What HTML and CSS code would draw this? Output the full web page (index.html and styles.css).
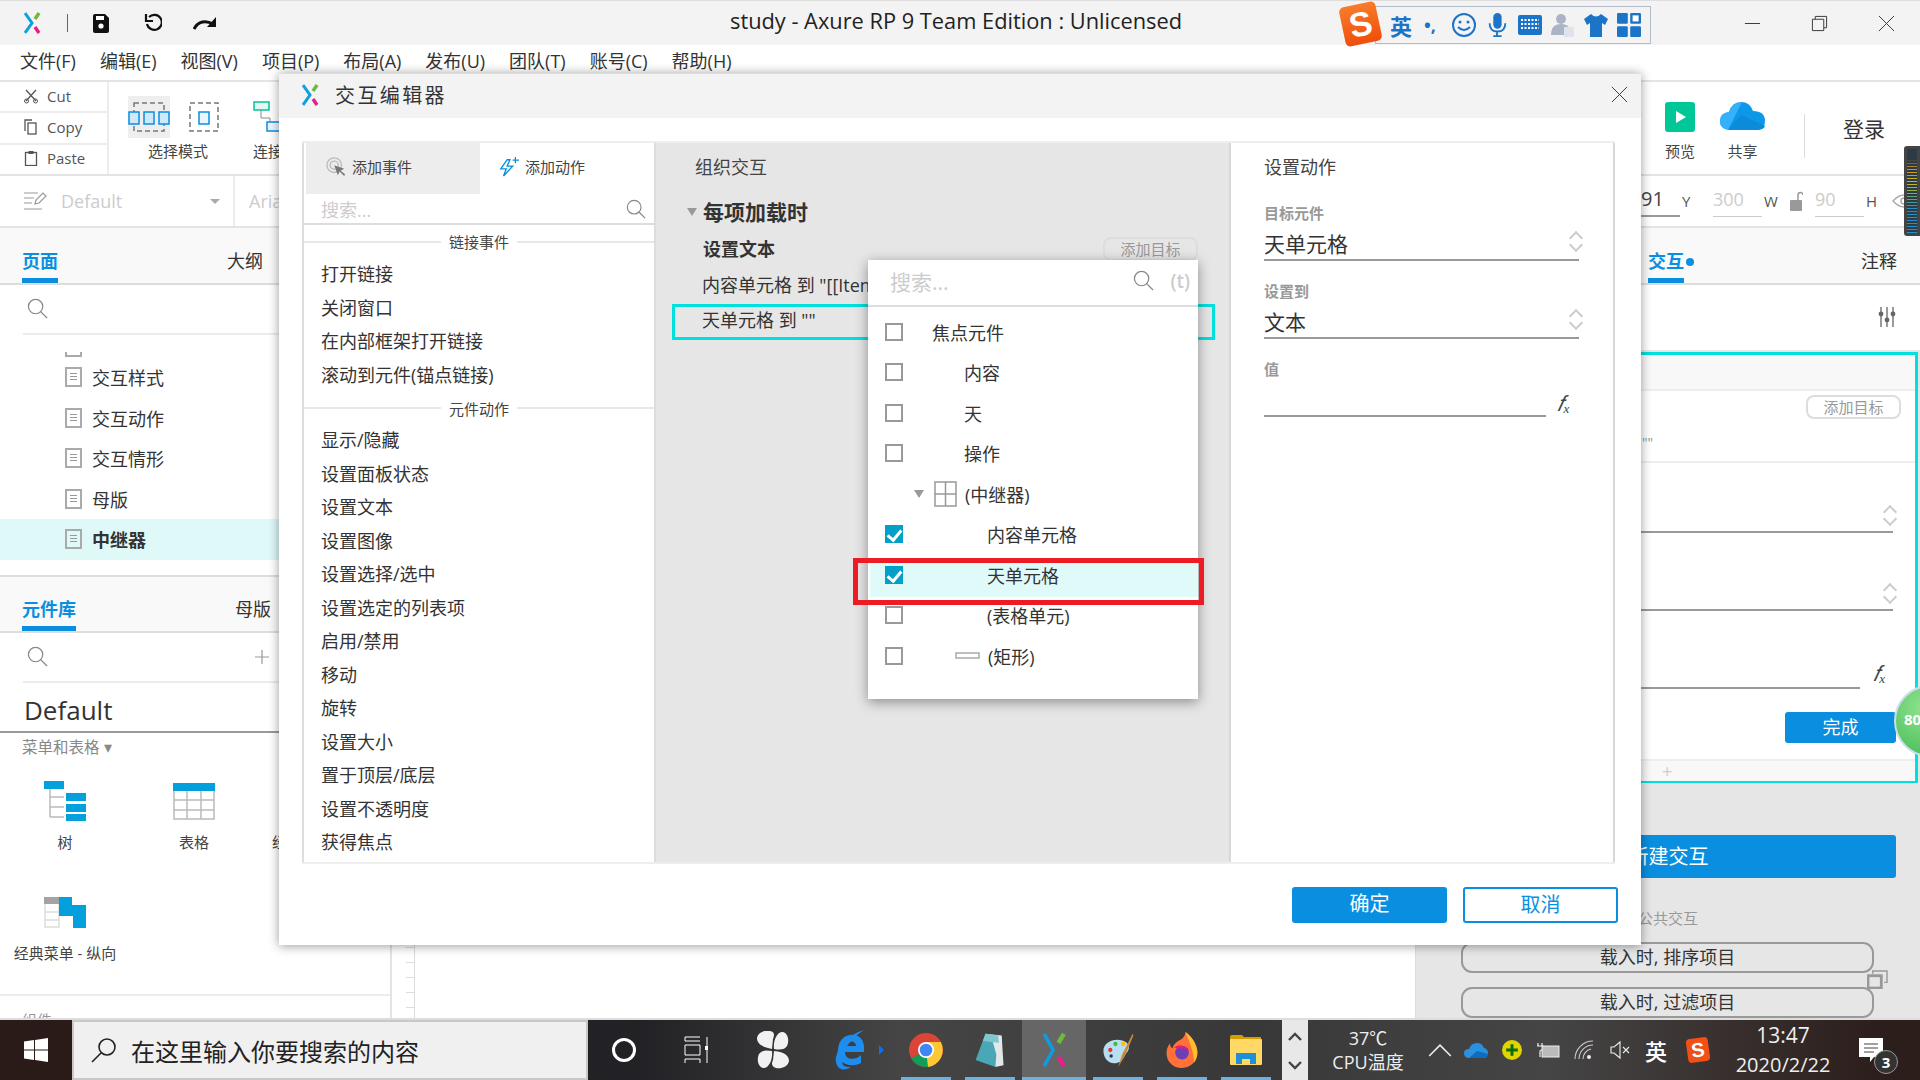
FILE: index.html
```html
<!DOCTYPE html>
<html lang="zh-CN">
<head>
<meta charset="utf-8">
<title>study - Axure RP 9</title>
<link rel="stylesheet" href="styles.css">
</head>
<body>
<div class="screen">
<div class="app">
  <header class="titlebar">
    <svg class="t-logo" viewBox="0 0 18 22"><path d="M1 1l7 10-7 10" fill="none" stroke="#0f9fdc" stroke-width="3"/><path d="M15 1l-4 6" stroke="#6cb83c" stroke-width="3.4"/><path d="M11 15l4 6" stroke="#e61e8c" stroke-width="3.4"/></svg>
    <i class="t-div"></i>
    <svg class="t-save" viewBox="0 0 18 21"><path d="M1 3q0-2 2-2h10l4 4v13q0 2-2 2H3q-2 0-2-2z" fill="#111"/><rect x="4" y="3" width="8" height="4" fill="#fff"/><circle cx="9" cy="13" r="2.6" fill="#fff"/></svg>
    <svg class="t-undo" viewBox="0 0 18 20"><path d="M5 4a7.5 7.5 0 1 1-2 7" fill="none" stroke="#111" stroke-width="2.2"/><path d="M2 1v7h7" fill="none" stroke="#111" stroke-width="2.2"/></svg>
    <svg class="t-redo" viewBox="0 0 24 14"><path d="M1 13C5 5 13 4 20 8" fill="none" stroke="#111" stroke-width="3"/><path d="M23 1v10H14z" fill="#111"/></svg>
    <div class="t-title">study - Axure RP 9 Team Edition : Unlicensed</div>
    <div class="win">
      <svg viewBox="0 0 18 18"><path d="M1 9h16" stroke="#333"/></svg>
      <svg viewBox="0 0 18 18"><path d="M1.5 4.5h12v12h-12zM4.5 4.5v-3h12v12h-3" fill="none" stroke="#333"/></svg>
      <svg viewBox="0 0 18 18"><path d="M1 1l16 16M17 1L1 17" stroke="#333"/></svg>
    </div>
  </header>
  <nav class="menubar"><span>文件(F)</span><span>编辑(E)</span><span>视图(V)</span><span>项目(P)</span><span>布局(A)</span><span>发布(U)</span><span>团队(T)</span><span>账号(C)</span><span>帮助(H)</span></nav>
  <section class="toolbar">
    <div class="clip">
      <div class="clip-row"><svg viewBox="0 0 16 16"><path d="M3 2l10 11M13 2L3 13" stroke="#555" stroke-width="1.3"/><circle cx="3.5" cy="13" r="2" fill="none" stroke="#555"/><circle cx="12.5" cy="13" r="2" fill="none" stroke="#555"/></svg><span>Cut</span></div>
      <div class="clip-row"><svg viewBox="0 0 16 16"><path d="M2 12V1h7" fill="none" stroke="#555" stroke-width="1.3"/><rect x="5" y="4" width="8" height="11" fill="none" stroke="#555" stroke-width="1.3"/></svg><span>Copy</span></div>
      <div class="clip-row"><svg viewBox="0 0 16 16"><rect x="2.5" y="2.5" width="11" height="13" fill="none" stroke="#555" stroke-width="1.3"/><rect x="5.5" y="1" width="5" height="3" fill="#555"/></svg><span>Paste</span></div>
    </div>
    <div class="tools">
      <div class="tool tool-sel">
        <div class="sel-icons">
          <div class="sel-on"><svg viewBox="0 0 42 32"><rect x="6" y="2" width="30" height="28" fill="none" stroke="#777" stroke-dasharray="5 3" stroke-width="1.5"/><g fill="#cfe8fa" stroke="#0a8fe0" stroke-width="1.5"><rect x="1" y="11" width="10" height="12"/><rect x="16" y="11" width="10" height="12"/><rect x="31" y="11" width="10" height="12"/></g></svg></div>
          <svg class="sel-off" viewBox="0 0 30 32"><rect x="1" y="2" width="28" height="28" fill="none" stroke="#777" stroke-dasharray="5 3" stroke-width="1.5"/><rect x="10" y="11" width="10" height="12" fill="#eaf5fd" stroke="#0a8fe0" stroke-width="1.5"/></svg>
        </div>
        <span>选择模式</span>
      </div>
      <div class="tool tool-conn">
        <svg viewBox="0 0 30 32"><rect x="1" y="1" width="15" height="8" fill="#e3f8f2" stroke="#00c39a" stroke-width="1.5"/><path d="M8 9v8h9v5" fill="none" stroke="#888"/><rect x="14" y="21" width="15" height="9" fill="#eaf5fd" stroke="#0a8fe0" stroke-width="1.5"/></svg>
        <span>连接</span>
      </div>
      <div class="tool-right">
        <div class="tool tool-play"><svg viewBox="0 0 30 30"><rect width="30" height="30" rx="3" fill="#00c797"/><path d="M12 9l10 6-10 6z" fill="#fff" transform="translate(-1 0)"/></svg><span>预览</span></div>
        <div class="tool tool-cloud"><svg viewBox="0 0 45 29"><path d="M10 28Q0 27 0 19t9-9q3-10 12-10t12 9q12 0 12 10 0 9-9 9z" fill="#0c97e8"/><path d="M8 28L22 0Q13 0 9 10 0 11 0 19q0 8 8 9z" fill="#35b0fb"/><path d="M8 28L21 13l24 11q-1 4-9 4z" fill="#0b8bd8"/></svg><span>共享</span></div>
        <i class="tool-sep"></i>
        <div class="login">登录</div>
      </div>
    </div>
  </section>
  <section class="stylebar">
    <div class="style-l">
      <svg viewBox="0 0 24 20"><path d="M1 2h14M1 7h10M1 12h8M1 18h18" stroke="#999" stroke-width="1.2"/><path d="M12 13l1-4 7-7 3 3-7 7z" fill="none" stroke="#999" stroke-width="1.2"/></svg>
      <span class="style-name">Default</span>
      <i class="style-arrow"></i>
    </div>
    <span class="style-font">Arial</span>
    <div class="coords">
      <span class="coord coord-on">91</span><b>Y</b>
      <span class="coord">300</span><b>W</b>
      <svg class="lock" viewBox="0 0 13 20"><rect y="9" width="12" height="11" rx="1" fill="#999"/><path d="M8 9V4a2.5 2.5 0 0 1 5 0" fill="none" stroke="#999" stroke-width="1.5"/></svg>
      <span class="coord coord-s">90</span><b>H</b>
      <svg class="eye" viewBox="0 0 24 16"><path d="M1 8q11-12 22 0-11 12-22 0z" fill="none" stroke="#aaa" stroke-width="1.4"/><circle cx="12" cy="8" r="3" fill="none" stroke="#aaa" stroke-width="1.4"/></svg>
    </div>
  </section>
  <main class="main">
    <aside class="left">
      <div class="ptabs"><span class="ptab on">页面</span><span class="ptab">大纲</span></div>
      <div class="lsearch"><svg viewBox="0 0 22 22"><circle cx="9" cy="9" r="7.5" fill="none" stroke="#888" stroke-width="1.3"/><path d="M14 14l7 7" stroke="#888" stroke-width="1.3"/></svg></div>
      <div class="tree">
        <div class="cut-row"><i class="pg"></i></div>
        <div class="tree-row"><i class="pg"></i><span>交互样式</span></div>
        <div class="tree-row"><i class="pg"></i><span>交互动作</span></div>
        <div class="tree-row"><i class="pg"></i><span>交互情形</span></div>
        <div class="tree-row"><i class="pg"></i><span>母版</span></div>
        <div class="tree-row active"><i class="pg"></i><span>中继器</span></div>
      </div>
      <div class="ptabs lib-tabs"><span class="ptab on">元件库</span><span class="ptab">母版</span></div>
      <div class="lsearch lib-search"><svg viewBox="0 0 22 22"><circle cx="9" cy="9" r="7.5" fill="none" stroke="#888" stroke-width="1.3"/><path d="M14 14l7 7" stroke="#888" stroke-width="1.3"/></svg><svg class="plus" viewBox="0 0 16 16"><path d="M8 1v14M1 8h14" stroke="#999" stroke-width="1.2"/></svg></div>
      <div class="lib-name">Default</div>
      <div class="lib-group">菜单和表格 ▾</div>
      <div class="widgets">
        <div class="widget w-tree"><svg viewBox="0 0 42 40"><path d="M6 6v30M6 16h14M6 26h14M6 36h14" fill="none" stroke="#bbb" stroke-width="1.5"/><g fill="#04a0dd"><rect width="20" height="8"/><rect x="22" y="12" width="20" height="8"/><rect x="22" y="23" width="20" height="8"/><rect x="22" y="33" width="20" height="7"/></g></svg><span>树</span></div>
        <div class="widget w-table"><svg viewBox="0 0 42 37"><rect y="0" width="42" height="8" fill="#04a0dd"/><path d="M1 8v28h40V8M14 8v28M28 8v28M1 17h40M1 27h40" fill="none" stroke="#bbb" stroke-width="1.5"/></svg><span>表格</span></div>
        <div class="widget w-extra"><span>经典菜单</span></div>
      </div>
      <div class="widget w-menu"><svg viewBox="0 0 42 31"><rect width="15" height="7" fill="#a3a3a3"/><path d="M1 7v23h14V7M1 15h14M1 23h14" fill="none" stroke="#ddd" stroke-width="1.5"/><path d="M15 0h13v8h14v23H29V19H15z" fill="#04a0dd"/></svg><span>经典菜单 - 纵向</span></div>
      <div class="left-foot"><span>组件</span></div>
    </aside>
    <div class="ruler"></div>
    <div class="canvas"></div>
    <aside class="inspector">
      <div class="ins-tabs"><span class="ptab on">交互</span><i class="ins-dot"></i><span class="ptab ins-note">注释</span></div>
      <div class="ins-tool"><svg viewBox="0 0 18 22"><path d="M3 1v20M9 1v20M15 1v20" stroke="#666" stroke-width="1.3"/><circle cx="3" cy="8" r="2.4" fill="#666"/><circle cx="9" cy="14" r="2.4" fill="#666"/><circle cx="15" cy="8" r="2.4" fill="#666"/></svg></div>
      <div class="ins-panel">
        <div class="card">
          <div class="card-head"></div>
          <div class="card-top"><span class="btn-ghost">添加目标</span></div>
          <div class="card-quote">""</div>
          <div class="card-field card-f1"><i class="chev"></i></div>
          <div class="card-field"><i class="chev"></i></div>
          <div class="card-fx"><i class="fx">𝑓ₓ</i></div>
          <div class="card-done"><span class="btn-done">完成</span></div>
          <div class="card-foot">+</div>
        </div>
        <div class="new-btn">新建交互</div>
        <div class="common">公共交互</div>
        <div class="pill">载入时, 排序项目</div>
        <div class="pill">载入时, 过滤项目</div>
      </div>
    </aside>
  </main>
</div>

<footer class="taskbar">
  <div class="start"><svg viewBox="0 0 24 24"><path d="M0 3.5l10-1.4V11.500H0zM11 2l13-2v11.500H11zM0 12.500h10v9.400L0 20.500zM11 12.500h13V24l-13-2z" fill="#fff"/></svg></div>
  <div class="tsearch"><svg viewBox="0 0 26 26"><circle cx="16" cy="10" r="8" fill="none" stroke="#222" stroke-width="1.6"/><path d="M10 16L1 25" stroke="#222" stroke-width="1.6"/></svg><span>在这里输入你要搜索的内容</span></div>
  <div class="tc tc-cortana"><i class="cortana"></i></div>
  <div class="tc tc-view"><svg viewBox="0 0 24 28"><path d="M1 5V1h15M1 5h15M1 23h15M1 27v-4M16 27v-4M1 9h15v10H1zM23 1v26" fill="none" stroke="#fff"/><rect x="21" y="10" width="4" height="4" fill="#fff"/></svg></div>
  <div class="tc tc-fan"><svg viewBox="0 0 32 38"><path d="M15 18C4 16 0 12 0 7 1 1 8-1 13 0q6 1 3 8zM17 18c-1-10 4-18 9-17 6 2 6 10 4 14q-3 5-13 3zM17 20c11 1 15 5 15 10-1 6-8 8-13 7q-6-2-3-8zM15 20c1 10-4 18-9 17-6-2-6-10-4-14q3-5 13-3z" fill="#f1f1f1"/></svg></div>
  <div class="tc tc-ie"><svg viewBox="0 0 32 42"><path d="M4 20C5 9 14 5 20 6c8 1 11 8 10 17H11c0 8 10 9 16 3v8C15 40 1 33 4 20zM12 17h10c0-6-9-6-10 0z" fill="#1d8ef0"/><path d="M3 36C-3 26 14 4 31 1c-10 4-28 24-22 35 2 2 4 2 8 2-6 4-12 3-14-2z" fill="#1d8ef0"/></svg><i class="ie-arrow"></i></div>
  <div class="tc run"><svg viewBox="0 0 34 34"><circle cx="17" cy="17" r="17" fill="#db4437"/><path d="M17 17L2.300 25.500A17 17 0 0 0 22 33.300z" fill="#0f9d58"/><path d="M17 9h14.700A17 17 0 0 1 19 34L17 17z" fill="#fcc934"/><circle cx="17" cy="17" r="8" fill="#fff"/><circle cx="17" cy="17" r="6.300" fill="#4285f4"/></svg></div>
  <div class="tc run"><svg viewBox="0 0 34 40"><path d="M12 2l18 2 2 33-9 2z" fill="#e3e7e8"/><path d="M12 2L1 31l22 8 1-14-6-22z" fill="#4aa7b5"/><path d="M12 2l-3 8 18 2-1-8z" fill="#7fc7cf"/></svg></div>
  <div class="tc run cur"><svg viewBox="0 0 28 40"><path d="M3 2l10 18L3 38" fill="none" stroke="#0e9be0" stroke-width="4"/><path d="M25 2l-6 10" stroke="#6dbb3c" stroke-width="5"/><path d="M19 28l6 10" stroke="#ea1e8c" stroke-width="5"/></svg></div>
  <div class="tc run"><svg viewBox="0 0 38 42"><path d="M2 22C2 12 14 7 24 10c9 3 9 9 6 13-3 3-4 8-9 12C10 40 2 32 2 22z" fill="#b8def2"/><circle cx="10" cy="21" r="2.500" fill="#e33"/><circle cx="16" cy="14" r="2.500" fill="#4b4"/><circle cx="25" cy="14" r="2.500" fill="#fb0"/><circle cx="11" cy="28" r="2" fill="#334"/><path d="M36 2L24 26l-5 15 8-13L37 4z" fill="#c9873b"/></svg></div>
  <div class="tc run"><svg viewBox="0 0 36 42"><path d="M18 42C6 42 0 33 0 25c0-6 2-9 4-12 0 3 1 5 3 6 2-8 9-9 12-12 2-2 3-5 3-7 6 4 14 14 14 24 0 10-8 18-18 18z" fill="#ff7139"/><path d="M22 0c6 4 14 14 14 24 0 5-2 9-4 12 0-11-4-22-10-36z" fill="#ffbd2e"/><circle cx="18" cy="24" r="8" fill="#6b3fb5"/><path d="M9 18c6-4 12-2 17 2-7-1-12 0-17-2z" fill="#e11d78"/></svg></div>
  <div class="tc run"><svg viewBox="0 0 34 32"><path d="M1 3q0-2 2-2h10l2 2h17v6H1z" fill="#d69d00"/><rect x="1" y="5" width="32" height="26" rx="1" fill="#ffd866"/><path d="M7 30v-11h20v11h-6v-5h-8v5z" fill="#1f8fd6"/></svg></div>
  <div class="scroller"><svg viewBox="0 0 14 9"><path d="M1 8l6-6 6 6" fill="none" stroke="#444" stroke-width="2.400"/></svg><svg viewBox="0 0 14 9"><path d="M1 1l6 6 6-6" fill="none" stroke="#444" stroke-width="2.400"/></svg></div>
  <div class="cpu"><span>37℃</span><span>CPU温度</span></div>
  <div class="tray">
    <div class="ti"><svg viewBox="0 0 20 12"><path d="M1 11l9-9 9 9" fill="none" stroke="#eee" stroke-width="1.300"/></svg></div>
    <div class="ti"><svg viewBox="0 0 24 16"><path d="M5 16Q0 16 0 11q0-4 5-4 2-6 8-6 5 0 7 5 4 1 4 5 0 5-5 5z" fill="#2a90e0"/><path d="M5 16l8-7 11 3q0 4-5 4z" fill="#0f6dbf"/></svg></div>
    <div class="ti"><svg viewBox="0 0 24 24"><circle cx="12" cy="12" r="12" fill="#e2d400"/><path d="M12 5v14M5 12h14" stroke="#0a6b10" stroke-width="3.500"/></svg></div>
    <div class="ti"><svg viewBox="0 0 24 16"><path d="M2 1v3M6 1v3M1 4h6v3l-3 2v6" fill="none" stroke="#eee" stroke-width="1.200"/><rect x="6" y="4" width="17" height="11" fill="#bbb" stroke="#eee"/></svg></div>
    <div class="ti"><svg viewBox="0 0 20 20"><path d="M1 19A18 18 0 0 1 19 1M5 19A14 14 0 0 1 19 5M9 19A10 10 0 0 1 17 9" fill="none" stroke="#ccc" stroke-width="1.100"/><circle cx="15" cy="17" r="2" fill="#eee"/></svg></div>
    <div class="ti"><svg viewBox="0 0 20 20"><path d="M1 7h3l6-5v16l-6-5H1z" fill="none" stroke="#eee" stroke-width="1.100"/><path d="M13 7l6 6M19 7l-6 6" stroke="#eee" stroke-width="1.100"/></svg></div>
    <div class="ti ti-ime">英</div>
    <div class="ti ti-s"><span>S</span></div>
  </div>
  <div class="clock"><span class="clock-t">13:47</span><span class="clock-d">2020/2/22</span></div>
  <div class="action"><svg viewBox="0 0 24 24"><path d="M0 0h24v19H15l-4 5v-5H0z" fill="#fff"/><path d="M5 6h14M5 10h14M5 14h10" stroke="#444" stroke-width="1.200"/></svg><span class="action-badge">3</span></div>
</footer>

<section class="dialog">
  <div class="d-title">
    <svg viewBox="0 0 18 22"><path d="M1 1l7 10-7 10" fill="none" stroke="#0f9fdc" stroke-width="3"/><path d="M15 1l-4 6" stroke="#6cb83c" stroke-width="3.400"/><path d="M11 15l4 6" stroke="#e61e8c" stroke-width="3.400"/></svg>
    <span>交互编辑器</span>
    <svg class="d-close" viewBox="0 0 18 18"><path d="M1 1l16 16M17 1L1 17" stroke="#333"/></svg>
  </div>
  <div class="d-body">
    <div class="col-lib">
      <div class="lib-tabbar">
        <div class="ltab ltab-on"><svg viewBox="0 0 22 22"><circle cx="9" cy="9" r="8" fill="none" stroke="#bbb" stroke-width="1.500"/><circle cx="9" cy="9" r="4.500" fill="none" stroke="#bbb" stroke-width="1.500"/><path d="M9 9l4 11 2-4 5 5 1-2-5-4 4-2z" fill="#777"/></svg><span>添加事件</span></div>
        <div class="ltab"><svg viewBox="0 0 22 22"><path d="M9 3L2 13h6l-3 8 10-11H9l3-7z" fill="none" stroke="#0a8fe0" stroke-width="1.500"/><path d="M18 0v7M15 3.500h7" stroke="#0a8fe0" stroke-width="1.400"/></svg><span>添加动作</span></div>
      </div>
      <div class="l-search"><span>搜索...</span><svg viewBox="0 0 22 22"><circle cx="9" cy="9" r="7.500" fill="none" stroke="#888" stroke-width="1.300"/><path d="M14 14l7 7" stroke="#888" stroke-width="1.300"/></svg></div>
      <div class="l-sec"><span>链接事件</span></div>
      <ul class="l-list">
        <li>打开链接</li><li>关闭窗口</li><li>在内部框架打开链接</li><li>滚动到元件(锚点链接)</li>
      </ul>
      <div class="l-sec l-sec2"><span>元件动作</span></div>
      <ul class="l-list">
        <li>显示/隐藏</li><li>设置面板状态</li><li>设置文本</li><li>设置图像</li><li>设置选择/选中</li><li>设置选定的列表项</li><li>启用/禁用</li><li>移动</li><li>旋转</li><li>设置大小</li><li>置于顶层/底层</li><li>设置不透明度</li><li>获得焦点</li>
      </ul>
    </div>
    <div class="col-org">
      <div class="org-h">组织交互</div>
      <div class="org-ev"><i class="tri"></i><span>每项加载时</span></div>
      <div class="org-act"><span>设置文本</span><span class="btn-ghost">添加目标</span></div>
      <div class="org-line">内容单元格 到 "[[Item.内容]]"</div>
      <div class="org-sel">天单元格 到 ""</div>
      <div class="popup">
        <div class="p-search"><span>搜索...</span><svg viewBox="0 0 22 22"><circle cx="9" cy="9" r="7.500" fill="none" stroke="#888" stroke-width="1.300"/><path d="M14 14l7 7" stroke="#888" stroke-width="1.300"/></svg><em>(t)</em></div>
        <div class="p-list">
          <div class="p-red"></div>
          <div class="p-row"><i class="ck"></i><span class="i0">焦点元件</span></div>
          <div class="p-row"><i class="ck"></i><span class="i1">内容</span></div>
          <div class="p-row"><i class="ck"></i><span class="i1">天</span></div>
          <div class="p-row"><i class="ck"></i><span class="i1">操作</span></div>
          <div class="p-row p-group"><i class="tri"></i><svg viewBox="0 0 23 26"><path d="M1 1h21v24H1zM11.500 1v24M1 13h21" fill="none" stroke="#999" stroke-width="1.500"/></svg><span>(中继器)</span></div>
          <div class="p-row"><i class="ck on"></i><span class="i2">内容单元格</span></div>
          <div class="p-row"><i class="ck on"></i><span class="i2">天单元格</span></div>
          <div class="p-row"><i class="ck"></i><span class="i2">(表格单元)</span></div>
          <div class="p-row"><i class="ck"></i><svg class="p-rect" viewBox="0 0 25 7"><rect x="1" y="1" width="23" height="5" fill="#fff" stroke="#aaa" stroke-width="1.500"/></svg><span>(矩形)</span></div>
        </div>
      </div>
    </div>
    <div class="col-set">
      <div class="set-h">设置动作</div>
      <label class="set-l set-l1">目标元件</label>
      <div class="set-f">天单元格<i class="chev"></i></div>
      <label class="set-l">设置到</label>
      <div class="set-f">文本<i class="chev"></i></div>
      <label class="set-l">值</label>
      <div class="set-v"><div class="set-line"></div><i class="fx">𝑓ₓ</i></div>
    </div>
  </div>
  <div class="d-foot"><span class="btn-ok">确定</span><span class="btn-no">取消</span></div>
</section>

<div class="sogou">
  <div class="sg-s">S</div>
  <span class="sg-en">英</span>
  <span class="sg-p">•,</span>
  <svg viewBox="0 0 24 24"><circle cx="12" cy="12" r="11" fill="none" stroke="#1c74c8" stroke-width="2"/><circle cx="8" cy="9" r="1.500" fill="#1c74c8"/><circle cx="16" cy="9" r="1.500" fill="#1c74c8"/><path d="M6 14q6 6 12 0" fill="none" stroke="#1c74c8" stroke-width="2"/></svg>
  <svg viewBox="0 0 20 26"><rect x="6" width="9" height="17" rx="4.500" fill="#1c74c8"/><path d="M2 11q0 9 8.500 9T19 11M10 20v5M6 25h9" fill="none" stroke="#1c74c8" stroke-width="2"/></svg>
  <svg viewBox="0 0 24 20"><rect width="24" height="20" rx="2" fill="#1c74c8"/><path d="M3 5h18M3 9h18M3 13h18" stroke="#fff" stroke-width="2" stroke-dasharray="2 1.500"/></svg>
  <svg viewBox="0 0 24 24"><circle cx="10" cy="6" r="5" fill="#aab4c4"/><path d="M0 22q0-11 10-11t10 11z" fill="#aab4c4"/><rect x="13" y="14" width="10" height="10" fill="#dfe3ea"/></svg>
  <svg viewBox="0 0 24 24"><path d="M7 1L0 6l3 6 3-2v14h12V10l3 2 3-6-7-5q-5 5-10 0z" fill="#1c74c8"/></svg>
  <svg viewBox="0 0 20 20"><g fill="#1c74c8"><rect width="9" height="9" rx="1"/><rect x="11" width="9" height="9" rx="1"/><rect y="11" width="9" height="9" rx="1"/><rect x="11" y="11" width="9" height="9" rx="1"/></g><rect x="13" y="2" width="5" height="5" fill="#fff"/></svg>
</div>
<div class="meter"></div>
<div class="ball"><span>80</span></div>
<svg class="float-ic" viewBox="0 0 22 20"><path d="M6 4V1h15v12h-3" fill="none" stroke="#999" stroke-width="1.500"/><rect x="1" y="6" width="14" height="13" fill="none" stroke="#999" stroke-width="3"/></svg>
</div>
</body>
</html>
```

FILE: styles.css
```css
* { box-sizing: border-box; }
html, body { margin: 0; height: 100%; }
body { font-family: "Open Sans", "Noto Sans CJK SC", sans-serif; color: #333; background: #fff; overflow: hidden; }
i, em { font-style: normal; }
ul { list-style: none; margin: 0; padding: 0; }
.screen { position: relative; width: 1920px; height: 1080px; display: flex; flex-direction: column; overflow: hidden; }
.app { height: 1020px; display: flex; flex-direction: column; border-bottom: 2px solid #ddd; }

/* title bar */
.titlebar { height: 45px; flex: none; background: #f3f3f3; border-top: 1px solid #ddd; display: flex; align-items: center; position: relative; }
.t-logo { width: 18px; height: 22px; margin-left: 24px; }
.t-div { width: 1px; height: 18px; background: #666; margin-left: 25px; }
.t-save { width: 18px; height: 21px; margin-left: 24px; }
.t-undo { width: 18px; height: 20px; margin-left: 34px; }
.t-redo { width: 24px; height: 14px; margin-left: 31px; }
.t-title { margin-left: 513px; width: 460px; font-size: 21.8px; white-space: nowrap; color: #222; margin-top: -6px; }
.win { margin-left: auto; display: flex; gap: 50px; margin-right: 25px; }
.win svg { width: 17px; height: 17px; }

/* menu */
.menubar { height: 37px; flex: none; display: flex; gap: 24px; padding: 2px 0 0 20px; font-size: 18px; border-bottom: 2px solid #e4e4e4; color: #333; line-height: 28px; }

/* toolbar */
.toolbar { height: 94px; flex: none; display: flex; border-bottom: 2px solid #e4e4e4; }
.clip { width: 109px; border-right: 2px solid #ececec; display: flex; flex-direction: column; }
.clip-row { flex: 1; display: flex; align-items: center; gap: 8px; padding: 0 0 2px 23px; font-size: 15px; color: #555; border-bottom: 2px solid #ececec; }
.clip-row:last-child { border-bottom: 0; }
.clip-row svg { width: 16px; height: 16px; }
.tools { flex: 1; display: flex; }
.tool { display: flex; flex-direction: column; align-items: center; font-size: 15px; color: #444; }
.tool span { line-height: 22px; }
.tool-sel { margin-left: 19px; width: 100px; }
.sel-icons { display: flex; align-items: center; gap: 19px; align-self: flex-start; margin-bottom: 2px; margin-top: 14px; }
.sel-on { width: 42px; height: 42px; background: #eee; display: flex; align-items: center; }
.sel-on svg { width: 42px; height: 32px; }
.sel-off { width: 30px; height: 32px; }
.tool-conn { margin-left: 25px; align-items: flex-start; }
.tool-conn svg { width: 30px; height: 32px; margin: 19px 0 7px; }
.tool-right { margin-left: auto; display: flex; align-items: flex-start; padding-right: 35px; }
.tool-play { width: 30px; margin-top: 20px; }
.tool-play svg { width: 30px; height: 30px; margin-bottom: 8px; }
.tool-cloud { width: 45px; margin: 20px 0 0 25px; }
.tool-cloud svg { width: 45px; height: 29px; margin-bottom: 9px; }
.tool-sep { width: 1px; height: 44px; background: #ddd; margin: 32px 0 0 39px; }
.login { font-size: 21px; margin: 32px 0 0 38px; line-height: 30px; color: #333; }

/* style bar */
.stylebar { height: 52px; flex: none; display: flex; align-items: center; border-bottom: 2px solid #e4e4e4; }
.style-l { width: 235px; height: 100%; border-right: 2px solid #ececec; display: flex; align-items: center; padding-left: 23px; }
.style-l svg { width: 24px; height: 20px; }
.style-name { margin-left: 14px; font-size: 18px; color: #ccc; }
.style-arrow { margin-left: auto; margin-right: 13px; border: 5px solid transparent; border-top-color: #aaa; border-bottom: 0; }
.style-font { margin-left: 14px; font-size: 18px; color: #ccc; }
.coords { margin-left: auto; display: flex; align-items: center; height: 100%; font-size: 15px; }
.coords b { font-weight: 400; color: #555; width: 33px; }
.coord { width: 49px; height: 32px; font-size: 18px; line-height: 28px; color: #ccc; border-bottom: 1px solid #ccc; margin-right: 2px; }
.coord-on { width: 39px; color: #444; border-bottom: 2px solid #999; margin-right: 2px; font-size: 20px; }
.coords .coord-on + b { width: 31px; }
.coords b:nth-of-type(2) { width: 26px; }
.lock { width: 13px; height: 20px; margin-right: 12px; }
.coords .coord-s + b { width: 26px; }
.eye { width: 24px; height: 16px; margin-right: 4px; }

/* main */
.main { flex: 1; display: flex; min-height: 0; }
.left { width: 392px; flex: none; border-right: 2px solid #e4e4e4; overflow: hidden; }
.ptabs { height: 57px; background: #f9f9f9; border-bottom: 2px solid #ddd; display: flex; padding-left: 22px; }
.ptab { font-size: 18px; line-height: 24px; padding: 21px 0 0; height: 55px; color: #333; }
.ptabs .ptab + .ptab { margin-left: 169px; }
.ptab.on { color: #0a8fe0; font-weight: 700; border-bottom: 5px solid #0a8fe0; }
.lsearch { height: 50px; padding: 13px 0 0 27px; display: flex; position: relative; }
.lsearch::after { content: ""; position: absolute; left: 23px; right: 0; bottom: 0; height: 2px; background: #ececec; }
.lsearch svg { width: 21px; height: 21px; }
.tree { height: 242px; border-bottom: 2px solid #ddd; overflow: hidden; }
.cut-row { height: 22px; padding-left: 65px; overflow: hidden; display: flex; align-items: flex-end; }
.cut-row .pg { height: 5px; border-top: 0; }
.tree-row { height: 40.5px; display: flex; align-items: center; padding-left: 65px; font-size: 18px; color: #333; }
.tree-row span { margin-left: 10px; }
.tree-row.active { background: #dff9f9; font-weight: 700; }
.pg { width: 17px; height: 20px; border: 2px solid #aaa; flex: none; background: linear-gradient(#999,#999) 3px 4px / 7px 1px no-repeat, linear-gradient(#999,#999) 3px 7px / 7px 1px no-repeat, linear-gradient(#999,#999) 3px 10px / 7px 1px no-repeat; }
.lib-tabs { height: 56px; }
.lib-tabs .ptab { height: 54px; padding-top: 20px; }
.lib-tabs .ptab + .ptab { margin-left: 159px; }
.plus { width: 16px; height: 16px; }
.lib-search .plus { position: absolute; left: 254px; top: 16px; width: 16px; height: 16px; }
.lib-name { height: 50px; font-size: 26px; padding: 10px 0 0 24px; line-height: 34px; border-bottom: 2px solid #999; color: #333; }
.lib-group { font-size: 15.500px; color: #888; padding: 2px 0 0 22px; line-height: 24px; height: 26px; }
.widgets { display: flex; height: 116px; padding-top: 22px; }
.widget { display: flex; flex-direction: column; align-items: center; font-size: 15px; color: #444; }
.w-tree { width: 42px; margin-left: 44px; }
.w-tree svg { width: 42px; height: 40px; margin-bottom: 10px; }
.w-table { width: 42px; margin-left: 87px; margin-top: 2px; }
.w-table svg { width: 42px; height: 37px; margin-bottom: 11px; }
.w-extra { margin-left: 57px; padding-top: 50px; align-items: flex-start; white-space: nowrap; }
.w-menu { width: 140px; margin-left: -5px; padding-top: 22px; height: 119px; }
.w-menu svg { width: 42px; height: 31px; margin-bottom: 14px; }
.w-menu span { white-space: nowrap; }
.left-foot { border-top: 2px solid #ececec; height: 24px; font-size: 15px; line-height: 20px; padding: 14px 0 0 22px; color: #999; overflow: hidden; }

.ruler { width: 23px; flex: none; border-right: 1px solid #ddd; background: repeating-linear-gradient(#fff 0 14px, #ddd 14px 15px) 14px 0 / 9px 100% no-repeat; }
.canvas { flex: 1; background: #fff; }
.inspector { width: 505px; flex: none; background: #fff; border-left: 1px solid #ddd; display: flex; flex-direction: column; overflow: hidden; }
.ins-tabs { height: 57px; flex: none; background: #f9f9f9; border-bottom: 2px solid #ddd; display: flex; padding-left: 232px; }
.ins-dot { width: 8px; height: 8px; border-radius: 50%; background: #0a8fe0; margin: 30px 0 0 2px; }
.ptab.ins-note { margin-left: 167px; }
.ins-tool { height: 65px; flex: none; padding: 21px 24px 0 0; display: flex; justify-content: flex-end; }
.ins-tool svg { width: 18px; height: 22px; }
.ins-panel { flex: 1; background: #e6e6e6; padding: 2px 2px 0 0; min-height: 0; overflow: hidden; }
.card { height: 431px; border: 3px solid #00e0dc; background: #fff; margin-left: 10px; display: flex; flex-direction: column; }
.card-head { height: 36px; background: #f8f8f8; border-bottom: 2px solid #eee; flex: none; }
.card-top { height: 30px; display: flex; justify-content: flex-end; padding: 4px 14px 0 0; flex: none; }
.btn-ghost { width: 95px; height: 24px; border: 2px solid #ddd; border-radius: 8px; font-size: 15px; line-height: 20px; text-align: center; color: #999; flex: none; }
.card-quote { height: 42px; flex: none; border-bottom: 2px solid #eee; padding: 12px 0 0 213px; font-size: 14px; color: #999; }
.card-field { height: 78px; flex: none; border-bottom: 2px solid #999; margin-right: 22px; position: relative; }
.card-f1 { height: 70px; }
.card-field .chev { position: absolute; right: -2px; bottom: 3px; }
.card-fx { height: 78px; flex: none; border-bottom: 2px solid #999; margin-right: 55px; position: relative; }
.card-fx .fx { position: absolute; right: -26px; bottom: 0; }
.card-done { height: 72px; flex: none; border-bottom: 2px solid #eee; display: flex; justify-content: flex-end; padding: 23px 19px 0 0; }
.btn-done { width: 111px; height: 31px; background: #0a8fe0; color: #fff; font-size: 18px; line-height: 30px; text-align: center; border-radius: 3px; }
.card-foot { flex: 1; background: #f8f8f8; color: #ccc; font-size: 18px; line-height: 20px; padding-left: 233px; }
.new-btn { margin: 52px 22px 0 25px; height: 43px; background: #0a8fe0; color: #fff; font-size: 20px; line-height: 44px; text-align: center; border-radius: 3px; }
.common { font-size: 15px; color: #999; margin: 29px 0 0 222px; line-height: 22px; height: 35px; }
.pill { margin: 0 44px 14px 45px; height: 31px; border: 2px solid #999; border-radius: 11px; font-size: 18px; line-height: 26px; text-align: center; color: #333; }
.fx { font-family: "Liberation Serif", serif; font-style: italic; font-size: 22px; color: #444; line-height: 26px; }

/* taskbar */
.taskbar { height: 60px; flex: none; display: flex; align-items: stretch; color: #eee; background: linear-gradient(90deg, #2a1a18 0, #2a1a18 72px, #222226 640px, #454545 900px, #383838 1250px, #454545 1550px, #2c1e1b 1880px); }
.start { width: 72px; display: flex; align-items: center; justify-content: center; }
.start svg { width: 24px; height: 24px; }
.tsearch { width: 516px; background: #f0f0f0; border: 2px solid #c8c8c8; display: flex; align-items: center; padding-left: 17px; color: #222; font-size: 24px; }
.tsearch svg { width: 26px; height: 26px; margin-right: 14px; }
.tc { width: 64px; display: flex; align-items: center; justify-content: center; position: relative; }
.tc-cortana { width: 72px; justify-content: flex-start; padding-left: 24px; }
.cortana { width: 24px; height: 24px; border: 3px solid #fff; border-radius: 50%; }
.tc-view { width: 72px; justify-content: flex-start; padding-left: 24px; }
.tc-view svg { width: 24px; height: 28px; }
.tc-fan { width: 80px; justify-content: flex-start; padding-left: 25px; }
.tc-fan svg { width: 32px; height: 38px; }
.tc-ie { width: 82px; justify-content: flex-start; padding-left: 22px; }
.tc-ie svg { width: 32px; height: 42px; }
.ie-arrow { border: 5px solid transparent; border-left: 5px solid #0b6ff0; border-right: 0; margin-left: 13px; }
.run svg { width: 34px; height: 36px; }
.run::after { content: ""; position: absolute; left: 7px; right: 7px; bottom: 0; height: 3px; background: #6eb0e0; }
.cur { background: #666; }
.cur::after { left: 0; right: 0; }
.scroller { width: 26px; margin-left: 4px; background: #e8e8e8; display: flex; flex-direction: column; justify-content: space-between; align-items: center; padding: 12px 0 10px; }
.scroller svg { width: 14px; height: 9px; }
.cpu { width: 120px; display: flex; flex-direction: column; align-items: center; justify-content: center; font-size: 18px; line-height: 24px; color: #eee; white-space: nowrap; }
.tray { display: flex; margin-left: -6px; }
.ti { width: 36px; display: flex; align-items: center; justify-content: center; }
.ti svg { width: 24px; height: 20px; }
.ti-ime { font-size: 22px; color: #fff; font-weight: 500; }
.ti-s { width: 48px; }
.ti-s span { width: 22px; height: 24px; background: #f04f15; color: #fff; border-radius: 4px; font: 700 20px/24px "Liberation Sans", sans-serif; text-align: center; transform: rotate(-8deg); }
.clock { width: 126px; display: flex; flex-direction: column; align-items: center; justify-content: center; color: #eee; white-space: nowrap; font-size: 20px; line-height: 29px; margin-left: -2px; }
.clock-t { font-size: 21px; }
.action { width: 54px; position: relative; display: flex; align-items: center; justify-content: center; }
.action svg { width: 24px; height: 24px; margin-right: 4px; }
.action-badge { position: absolute; left: 28px; top: 30px; width: 24px; height: 24px; border-radius: 50%; background: #333; border: 1px solid #999; font-size: 15px; font-weight: 700; line-height: 22px; text-align: center; color: #fff; }

/* dialog */
.dialog { position: absolute; left: 279px; top: 73px; width: 1362px; height: 872px; background: #fff; box-shadow: 0 1px 10px rgba(0,0,0,.4); display: flex; flex-direction: column; border-top: 1px solid #ddd; }
.d-title { height: 44px; flex: none; background: #f3f3f3; display: flex; align-items: center; padding: 0 0 3px 23px; font-size: 20px; }
.d-title svg { width: 18px; height: 22px; }
.d-title span { margin-left: 15px; letter-spacing: 2.400px; }
.d-title .d-close { width: 17px; height: 17px; margin-left: auto; margin-right: 13px; }
.d-body { margin: 23px 26px 0 23px; height: 723px; flex: none; display: flex; border-top: 2px solid #eee; border-bottom: 2px solid #eee; }
.col-lib { width: 354px; flex: none; border-left: 2px solid #ddd; border-right: 2px solid #ddd; }
.lib-tabbar { display: flex; height: 51px; }
.ltab { width: 176px; display: flex; align-items: center; font-size: 15px; padding: 0 0 4px 20px; color: #444; }
.ltab-on { background: #ededed; margin-left: 2px; }
.ltab svg { width: 20px; height: 20px; margin-right: 6px; }
.ltab + .ltab { padding-left: 19px; }
.l-search { height: 31px; border-bottom: 2px solid #ddd; display: flex; align-items: center; padding: 0 8px 0 17px; font-size: 18px; color: #ccc; justify-content: space-between; }
.l-search svg { width: 20px; height: 20px; }
.l-sec { height: 33px; display: flex; align-items: center; gap: 8px; font-size: 15px; color: #444; }
.l-sec::before, .l-sec::after { content: ""; flex: 1; height: 2px; background: #e8e8e8; }
.l-sec2 { height: 32px; }
.l-list li { height: 33.500px; line-height: 33px; padding-left: 17px; font-size: 18px; color: #333; }
.col-org { width: 575px; flex: none; background: #e6e6e6; border-right: 2px solid #d8d8d8; position: relative; padding: 10px 16px 0 37px; }
.org-h { font-size: 18px; line-height: 28px; color: #444; margin-left: 2px; }
.org-ev { display: flex; align-items: center; margin: 16px 0 0 -6px; font-size: 21px; font-weight: 700; line-height: 30px; color: #333; }
.tri { border: 5px solid transparent; border-top: 8px solid #999; border-bottom: 0; width: 0; height: 0; }
.org-ev .tri { margin-right: 6px; }
.org-act { display: flex; justify-content: space-between; align-items: center; margin: 10px 0 0 10px; font-size: 18px; font-weight: 700; line-height: 24px; }
.org-act .btn-ghost { font-weight: 400; margin-right: 15px; }
.org-line { margin: 10px 0 0 9px; font-size: 18px; line-height: 28px; white-space: nowrap; overflow: hidden; width: 320px; }
.org-sel { margin: 5px 0 0 -21px; height: 36px; width: 543px; border: 3px solid #00e0dc; padding-left: 27px; font-size: 18px; line-height: 26px; }
.popup { position: absolute; left: 212px; top: 117px; width: 330px; height: 439px; background: #fff; box-shadow: 0 3px 12px rgba(0,0,0,.4); }
.p-search { height: 47px; border-bottom: 2px solid #ddd; display: flex; align-items: center; padding: 0 0 4px 22px; font-size: 21px; color: #ccc; }
.p-search svg { width: 21px; height: 21px; margin-left: auto; }
.p-search em { font-size: 19px; font-weight: 600; color: #ccc; margin: 0 8px 0 16px; }
.p-list { padding-top: 4.500px; position: relative; }
.p-red { position: absolute; left: -15px; top: 251px; width: 351px; height: 47px; border: 5px solid #ed1c24; background: linear-gradient(#e0f9f9,#e0f9f9) 12px 0 / 328px 34px no-repeat; }
.p-row { height: 40.5px; display: flex; align-items: center; padding-left: 17px; font-size: 18px; position: relative; z-index: 1; }
.ck { width: 18px; height: 18px; flex: none; border: 2px solid #999; background: #fff; }
.ck.on { border: 0; background: #02a0c9; position: relative; }
.ck.on::after { content: ""; position: absolute; left: 5px; top: 2px; width: 6px; height: 11px; border: solid #fff; border-width: 0 3px 3px 0; transform: rotate(40deg); }
.i0 { margin-left: 29px; }
.i1 { margin-left: 61px; }
.i2 { margin-left: 84px; }
.p-group { padding-left: 46px; }
.p-group svg { width: 23px; height: 26px; margin: 0 8px 0 10px; }
.p-rect { width: 25px; height: 7px; margin: 0 8px 0 52px; }
.col-set { width: 384px; flex: none; border-right: 2px solid #d8d8d8; padding: 10px 0 0 33px; }
.set-h { font-size: 18px; line-height: 28px; color: #444; }
.set-l { display: block; font-size: 15px; line-height: 20px; color: #999; font-weight: 700; margin-top: 20px; }
.set-l1 { margin-top: 22px; }
.set-f { width: 315px; height: 35px; border-bottom: 2px solid #999; font-size: 21px; line-height: 36px; position: relative; margin-top: 3px; }
.set-f .chev { position: absolute; right: -2px; top: 2px; }
.chev { display: block; width: 12px; height: 26px; }
.chev::before, .chev::after { content: ""; position: absolute; left: 2px; width: 8px; height: 8px; border: solid #ccc; transform: rotate(45deg); }
.chev::before { top: 5px; border-width: 2px 0 0 2px; }
.chev::after { top: 12px; border-width: 0 2px 2px 0; }
.set-v { display: flex; align-items: flex-end; height: 38px; }
.set-line { width: 282px; height: 2px; background: #999; }
.set-v .fx { margin-left: 11px; }
.d-foot { display: flex; justify-content: flex-end; gap: 16px; padding: 23px 23px 0 0; }
.btn-ok, .btn-no { width: 155px; height: 36px; border-radius: 3px; font-size: 20px; line-height: 34px; text-align: center; }
.btn-ok { background: #0a8fe0; color: #fff; }
.btn-no { border: 2px solid #0a8fe0; color: #0a8fe0; line-height: 32px; }

/* floating widgets */
.sogou { position: absolute; left: 1375px; top: 6px; width: 276px; height: 38px; background: #f3f3f3; border: 1px solid #b4bccb; display: flex; align-items: center; gap: 9px; padding-left: 14px; }
.sogou svg { width: 24px; height: 24px; flex: none; }
.sg-s { position: absolute; left: -34px; top: -3px; width: 37px; height: 40px; background: linear-gradient(#f77c2a,#f04e0c); border-radius: 5px; color: #fff; font: 700 34px/40px "Liberation Sans", sans-serif; text-align: center; transform: rotate(-12deg); }
.sg-en { font-size: 22px; font-weight: 700; color: #1c74c8; }
.sg-p { font-size: 18px; font-weight: 700; color: #1c74c8; width: 16px; margin: 0 3px; }
.meter { position: absolute; left: 1904px; top: 146px; width: 16px; height: 90px; background: repeating-linear-gradient(#2b3b46 0 2px, transparent 2px 3px), linear-gradient(#2b3b46 12%, #c98a20 22%, #c9b820 40%, #6fae5a 55%, #2a90c8 70%); border: 3px solid #444; border-radius: 3px 0 0 3px; }
.ball { position: absolute; left: 1894px; top: 685px; width: 72px; height: 72px; border-radius: 50%; background: radial-gradient(circle at 40% 30%, #8fe38f, #3db64d); border: 2px solid #cde; color: #fff; font-size: 15px; font-weight: 700; padding: 22px 0 0 8px; line-height: 20px; }
.float-ic { position: absolute; left: 1867px; top: 970px; width: 21px; height: 19px; }
```
